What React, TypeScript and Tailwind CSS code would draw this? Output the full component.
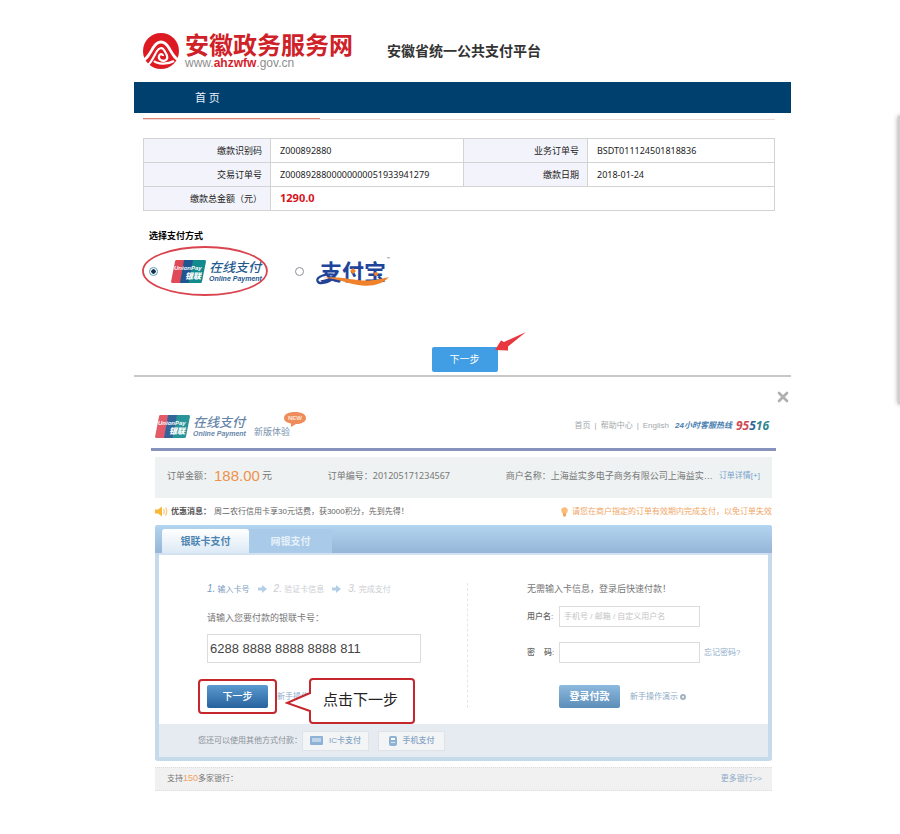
import { ReactNode, useState } from 'react';
import { X } from 'lucide-react';

/* ───────── Logos & icons ───────── */
const UnionPayMark = ({ className }: { className?: string }) => (
  <svg viewBox="0 0 35 23" className={className} aria-label="UnionPay">
    <path d="M5 0 H16 L11 23 H1.500 Q-0.300 23 0.200 21 L4 1.500 Q4.300 0 5 0 Z" fill="#e04a58" />
    <path d="M13 0 H25 L20 23 H9 Z" fill="#1f5590" />
    <path d="M22 0 H33.500 Q35.300 0 34.900 2 L31 21.500 Q30.700 23 29.500 23 H17.500 Z" fill="#128a8e" />
    <text x="3" y="10" fontSize="6" fontStyle="italic" fontWeight="700" fill="#fff" fontFamily="Liberation Sans, sans-serif">
      UnionPay
    </text>
    <text x="14" y="19" fontSize="8" fontStyle="italic" fontWeight="900" fill="#fff" fontFamily="Noto Sans CJK SC, sans-serif">
      银联
    </text>
  </svg>
);

const UnionPayLogo = ({ muted }: { muted?: boolean }) => (
  <span className={`flex items-center gap-[3px] ${muted ? 'text-[#55799f] opacity-90' : 'text-[#1f5b8f]'}`}>
    <UnionPayMark className="h-[23px] w-[35px]" />
    <span className="flex flex-col">
      <span className="text-[13px] font-medium italic leading-[15px]">在线支付</span>
      <span className="font-['Liberation_Sans',sans-serif] text-[7px] font-bold italic leading-[8px]">Online Payment</span>
    </span>
  </span>
);

const AlipayLogo = () => (
  <span className="relative block pl-1 text-[22px] font-bold leading-[24px] text-[#20449a]">
    支付宝
    <svg viewBox="0 0 74 28" className="absolute left-0 top-0 h-[28px] w-[74px]">
      <path d="M20 16 C9 14 0 18 1.500 22 C3 26 13 24 19 18" fill="none" stroke="#20449a" strokeWidth="2.200" />
      <path d="M7 19 C22 16 38 22 52 21.500 C61 21 65 20 73 18 C67 25 57 27.500 46 26.500 C31 25 22 19 7 19 Z" fill="#f0822b" />
      <path d="M37 9 l3 3 -3 3 -3 -3 Z" fill="#f0822b" />
      <circle cx="60" cy="15" r="2" fill="#f0822b" />
    </svg>
    <span className="absolute -right-1 -top-1 text-[4px] leading-[8px] text-gray-500">™</span>
  </span>
);

const SiteEmblem = () => (
  <svg viewBox="0 0 36 36" className="h-[36px] w-[36px]">
    <circle cx="18" cy="18" r="18" fill="#dd1a22" />
    <path d="M-2 28 C4 27 7 20 10 15 C13 10 16 9 18 9 C20 9 23 10 26 15 C29 20 32 27 38 28" fill="none" stroke="#fff" strokeWidth="2.800" />
    <path d="M5 32 C9 29 12 21 14 18 C16 15 19 14 21 17 C23 20 26 25 23 27 C20 29 15 27 16 23 C17 20 20 21 20 23" fill="none" stroke="#fff" strokeWidth="2.200" />
    <path d="M11 28 C14 31 24 32 31 28" fill="none" stroke="#fff" strokeWidth="2.400" />
  </svg>
);

const StepArrow = () => (
  <svg viewBox="0 0 9 8" className="h-2 w-[9px]">
    <path d="M0 2.500 H4 V0 L9 4 L4 8 V5.500 H0 Z" fill="#b3cfe8" />
  </svg>
);

const SpeakerIcon = () => (
  <svg viewBox="0 0 13 11" className="h-[11px] w-[13px]">
    <path d="M0 3.500 H3 L7 0.500 V10.500 L3 7.500 H0 Z" fill="#f6b73c" />
    <path d="M8.500 3 Q10 5.500 8.500 8 M10.500 1.500 Q13 5.500 10.500 9.500" fill="none" stroke="#f8c876" strokeWidth="1.200" />
  </svg>
);

const BulbIcon = () => (
  <svg viewBox="0 0 7 10" className="h-[10px] w-[7px]">
    <circle cx="3.500" cy="3.500" r="3.200" fill="#f9bd7c" />
    <path d="M2 6 H5 V9 Q3.500 10.500 2 9 Z" fill="#f2a862" />
  </svg>
);

/* ───────── Order summary ───────── */
const LabelCell = ({ children }: { children: ReactNode }) => (
  <th scope="row" className="h-6 border border-[#d3d3d3] bg-[#f3f4fb] px-2 text-right font-normal">
    {children}
  </th>
);

const ValueCell = ({ children, span }: { children: ReactNode; span?: number }) => (
  <td colSpan={span} className="border border-[#d3d3d3] px-[9px]">
    {children}
  </td>
);

const OrderTable = () => (
  <table className="w-full table-fixed border-collapse text-[9px] leading-[12px] text-[#222]">
    <colgroup>
      <col className="w-[127px]" />
      <col className="w-[193px]" />
      <col className="w-[124px]" />
      <col />
    </colgroup>
    <tbody>
      <tr>
        <LabelCell>缴款识别码</LabelCell>
        <ValueCell>Z000892880</ValueCell>
        <LabelCell>业务订单号</LabelCell>
        <ValueCell>BSDT011124501818836</ValueCell>
      </tr>
      <tr>
        <LabelCell>交易订单号</LabelCell>
        <ValueCell>Z0008928800000000051933941279</ValueCell>
        <LabelCell>缴款日期</LabelCell>
        <ValueCell>2018-01-24</ValueCell>
      </tr>
      <tr>
        <LabelCell>缴款总金额（元）</LabelCell>
        <ValueCell span={3}>
          <strong className="text-[11px] text-[#d8141c]">1290.0</strong>
        </ValueCell>
      </tr>
    </tbody>
  </table>
);

const radioClass =
  'h-[9px] w-[9px] appearance-none rounded-full border border-[#8b9299] bg-white checked:border-[#5b9fb5] checked:bg-[radial-gradient(circle,#12324a_40%,#fff_50%)]';

const PayMethods = () => {
  const [method, setMethod] = useState('unionpay');

  return (
    <fieldset>
      <legend className="px-1.5 text-[9px] font-bold leading-[12px] text-black">选择支付方式</legend>
      <div className="mt-[15px] flex h-7 items-center gap-[33px] pl-1.5">
        <label className="relative flex items-center gap-[13px]">
          <input
            type="radio"
            name="method"
            checked={method === 'unionpay'}
            onChange={() => setMethod('unionpay')}
            className={radioClass}
          />
          <UnionPayLogo />
          {/* hand-drawn highlight */}
          <svg viewBox="0 0 126 50" className="pointer-events-none absolute -left-[7px] -top-[14px] h-[50px] w-[126px]">
            <ellipse cx="63" cy="25" rx="62" ry="24" fill="none" stroke="#d9444f" strokeWidth="1.800" />
          </svg>
        </label>
        <label className="flex items-center gap-3">
          <input
            type="radio"
            name="method"
            checked={method === 'alipay'}
            onChange={() => setMethod('alipay')}
            className={radioClass}
          />
          <AlipayLogo />
        </label>
      </div>
    </fieldset>
  );
};

const GovPayment = () => (
  <section className="border-b-2 border-[#c8c8c8]">
    <header className="flex h-[82px] items-center gap-[34px] pl-[9px] pt-5">
      <div className="flex items-center gap-1.5">
        <SiteEmblem />
        <div>
          <div className="text-[24px] font-bold leading-[24px] text-[#cf2128]">安徽政务服务网</div>
          <div className="font-['Liberation_Sans',sans-serif] text-[12px] leading-[12px] text-[#8e8e8e]">
            www.<b className="text-[#d5232b]">ahzwfw</b>.gov.cn
          </div>
        </div>
      </div>
      <h1 className="text-[14px] font-bold leading-[20px] text-[#333]">安徽省统一公共支付平台</h1>
    </header>
    <nav className="flex h-[31px] items-center bg-[#00406f] pl-[61px] pt-0.5 text-[11px] text-[#e8f0f6]">
      <a href="#home">首 页</a>
    </nav>
    <div className="pl-[9px] pr-4">
      <div className="mt-[5px] border-b border-[#ecdeda]">
        <div className="h-px w-[28%] bg-[#e08272]" />
      </div>
      <div className="mt-[18px]">
        <OrderTable />
      </div>
      <div className="mt-[19px]">
        <PayMethods />
      </div>
    </div>
    <div className="mt-[62px] flex justify-center pb-[3px] pl-1">
      <button type="button" className="relative h-[25px] w-[66px] rounded-[2px] bg-[#419de4] text-[10px] text-white">
        下一步
        <svg viewBox="0 0 31 20" className="absolute -right-[28px] -top-[15px] h-[20px] w-[31px]">
          <path d="M0 18 L6 8.500 L9 10 L31 0 L13 14.500 L13 18.500 Z" fill="#e8373e" />
        </svg>
      </button>
    </div>
  </section>
);

/* ───────── UnionPay checkout ───────── */
const CheckoutHeader = () => (
  <header className="ml-[17px] mr-[15px] flex items-center justify-between border-b-[3px] border-[#8793bd] pb-2.5 pl-1 pr-[7px]">
    <div className="flex items-center gap-2">
      <UnionPayLogo muted />
      <div className="relative pt-3 text-[9px] leading-[12px] text-[#7590ac]">
        新版体验
        <svg viewBox="0 0 22 15" className="absolute -top-[2px] left-[30px] h-[15px] w-[22px]">
          <path d="M11 0 C17 0 22 2 22 6 C22 10 17 12 12 12 L7 15 L7 11.500 C3 11 0 9 0 6 C0 2 5 0 11 0 Z" fill="#ef8c5b" />
          <text x="4" y="8" fontSize="6" fontWeight="700" fill="#fde6d4" fontFamily="Liberation Sans, sans-serif">
            NEW
          </text>
        </svg>
      </div>
    </div>
    <div className="flex items-center gap-1 text-[8px] leading-[14px] text-[#a3a7ab]">
      <a href="#index">首页</a>
      <span>|</span>
      <a href="#help">帮助中心</a>
      <span>|</span>
      <a href="#english">English</a>
      <span className="pl-0.5 font-bold italic text-[#4a80b0]">24小时客服热线</span>
      <span className="font-['Noto_Sans',sans-serif] text-[12px] font-bold italic">
        <span className="text-[#cf4a55]">95</span>
        <span className="text-[#2f6398]">5</span>
        <span className="text-[#2f868c]">16</span>
      </span>
    </div>
  </header>
);

const OrderBar = () => (
  <div className="mt-1.5 flex h-[41px] items-center justify-between bg-[#eef2f2] px-3 pb-1 text-[9px] leading-[18px] text-[#777]">
    <div className="flex items-center">
      订单金额：
      <span className="pl-0.5 font-['Liberation_Sans',sans-serif] text-[15px] text-[#f0914a]">188.00</span>
      <span className="pl-0.5 text-[10px]">元</span>
    </div>
    <div className="font-['Noto_Sans','Noto_Sans_CJK_SC',sans-serif]">订单编号：201205171234567</div>
    <div className="flex items-center gap-1.5">
      商户名称：上海益实多电子商务有限公司上海益实…
      <a href="#detail" className="text-[8px] text-[#79a3cc]">
        订单详情[+]
      </a>
    </div>
  </div>
);

const NoticeBar = () => (
  <div className="flex h-[27px] items-center justify-between text-[8px] leading-[12px]">
    <div className="flex items-center gap-[3px] text-[#666]">
      <SpeakerIcon />
      <b className="text-[#555]">优惠消息：</b>
      <span>周二农行信用卡享30元话费，获3000积分，先到先得！</span>
    </div>
    <div className="flex items-center gap-1 whitespace-nowrap text-[#f0a666]">
      <BulbIcon />
      请您在商户指定的订单有效期内完成支付，以免订单失效
    </div>
  </div>
);

const steps = ['输入卡号', '验证卡信息', '完成支付'];

const CardForm = () => {
  const [card, setCard] = useState('6288 8888 8888 8888 811');

  return (
    <form className="flex flex-col items-start border-r border-dashed border-[#e6e6e6] pl-12">
      <ol className="flex h-3 items-center gap-2 text-[8px] leading-[12px]">
        {steps.map((step, idx) => (
          <li key={step} className={`flex items-center gap-[7px] ${idx === 0 ? 'text-[#7d9cc0]' : 'text-[#cacdd2]'}`}>
            {idx > 0 && <StepArrow />}
            <span>
              <i className="font-['Liberation_Sans',sans-serif] text-[10px]">{idx + 1}.</i> {step}
            </span>
          </li>
        ))}
      </ol>
      <label htmlFor="card" className="mt-4 text-[9px] leading-[14px] text-[#777]">
        请输入您要付款的银联卡号：
      </label>
      <input
        id="card"
        value={card}
        onChange={(e) => setCard(e.target.value)}
        className="mt-[9px] h-[29px] w-[214px] border border-[#dcdcdc] bg-white px-0.5 font-['Liberation_Sans',sans-serif] text-[13px] text-[#444]"
      />
      <div className="relative mt-[22px] flex items-center gap-[9px]">
        <button
          type="button"
          className="h-[23px] w-[61px] rounded-[2px] bg-linear-to-b from-[#5b9bd0] to-[#28629e] text-[10px] font-medium text-white"
        >
          下一步
        </button>
        {/* the callout covers the rest of this link */}
        <a href="#demo" className="text-[8px] leading-[12px] text-[#8eabc9]">
          新手操作演示
        </a>
        <div className="pointer-events-none absolute -left-[9px] -top-1.5 h-[35px] w-[79px] rounded-[4px] border-2 border-[#c5272c]" />
        <div className="absolute -top-[7px] left-[78px] h-[46px] w-[130px]">
          <svg viewBox="0 0 130 46" className="absolute inset-0 h-[46px] w-[130px]">
            <path
              d="M28 1 H126 Q129 1 129 4 V42 Q129 45 126 45 H28 Q25 45 25 42 V33 L2 25 L25 15 V4 Q25 1 28 1 Z"
              fill="#fff"
              stroke="#c5272c"
              strokeWidth="2"
            />
          </svg>
          <p className="relative pl-[38px] text-[15px] leading-[44px] text-[#222]">点击下一步</p>
        </div>
      </div>
    </form>
  );
};

const loginInputClass = 'h-[21px] w-[141px] border border-[#dcdcdc] bg-white px-1 text-[8px] text-[#555] placeholder:text-[#c4c4c4]';

const LoginForm = () => (
  <form className="pl-[59px] text-[8px] text-[#666]">
    <p className="text-[9px] leading-[12px] text-[#777]">无需输入卡信息，登录后快速付款！</p>
    <div className="mt-[11px] flex h-[21px] items-center">
      <label htmlFor="user" className="w-8 font-medium">
        用户名:
      </label>
      <input id="user" placeholder="手机号 / 邮箱 / 自定义用户名" className={loginInputClass} />
    </div>
    <div className="mt-[15px] flex h-[21px] items-center">
      <label htmlFor="password" className="w-8 whitespace-pre font-medium">
        {'密    码:'}
      </label>
      <input id="password" type="password" className={loginInputClass} />
      <a href="#forgot" className="pl-1 text-[#8eabc9]">
        忘记密码?
      </a>
    </div>
    <div className="mt-[22px] flex items-center pl-8">
      <button
        type="button"
        className="h-[23px] w-[61px] rounded-[2px] bg-linear-to-b from-[#8dbade] to-[#5c8db8] text-[10px] font-bold text-white"
      >
        登录付款
      </button>
      <a href="#demo" className="flex items-center gap-0.5 pl-2.5 text-[#8eabc9]">
        新手操作演示
        <span className="h-[6px] w-[6px] rounded-full border-2 border-[#9fb3c4]" />
      </a>
    </div>
  </form>
);

const otherButtonClass =
  'flex h-5 w-[67px] items-center justify-center gap-1.5 border border-[#dfe3e8] bg-[#f2f4f6] text-[8px] font-medium text-[#84a3c2]';

const CheckoutPanel = () => (
  <div className="rounded-[3px] border-x-4 border-b-4 border-[#c5daeb] bg-white">
    <div className="-mx-1 flex h-7 items-end rounded-t-[3px] bg-linear-to-b from-[#b3d5f0] to-[#96b5d8] pl-[7px] text-[10px] font-bold">
      <button type="button" className="h-6 w-[87px] rounded-t-[3px] bg-linear-to-b from-white to-[#dce9f5] text-[#4e84b0]">
        银联卡支付
      </button>
      <button type="button" className="h-6 w-[83px] bg-[#a9cae8] text-[#e6f1fa]">
        网银支付
      </button>
    </div>
    <div className="h-0.5 bg-[#d3e2f0]" />
    <div className="grid grid-cols-[309fr_300fr] pb-4 pt-7">
      <CardForm />
      <LoginForm />
    </div>
    <div className="flex h-[33px] items-center bg-[#e6ebf1] pl-[39px] text-[8px] text-[#8a8f96]">
      <span>您还可以使用其他方式付款：</span>
      <div className="flex gap-[9px]">
        <button type="button" className={otherButtonClass}>
          <svg viewBox="0 0 13 9" className="h-[9px] w-[13px]">
            <rect width="13" height="9" rx="1" fill="#8db2d5" />
            <rect x="2" y="2" width="9" height="4" fill="#bcd3e8" />
          </svg>
          IC卡支付
        </button>
        <button type="button" className={otherButtonClass}>
          <svg viewBox="0 0 8 10" className="h-[10px] w-2">
            <rect width="8" height="10" rx="2" fill="#8db2d5" />
            <rect x="2" y="2" width="4" height="2" fill="#fff" />
            <rect x="2" y="6" width="4" height="1" fill="#dce8f3" />
          </svg>
          手机支付
        </button>
      </div>
    </div>
  </div>
);

const UnionPayCheckout = () => (
  <section className="font-['Liberation_Sans','Noto_Sans_CJK_SC',sans-serif]">
    <div className="flex h-[37px] justify-end pt-3">
      <button type="button" aria-label="关闭" className="flex h-4 w-4 items-center justify-center text-[#b0b0b0]">
        <X size={18} strokeWidth={4} />
      </button>
    </div>
    <CheckoutHeader />
    <div className="ml-[21px] mr-[19px]">
      <OrderBar />
      <NoticeBar />
      <CheckoutPanel />
      <div className="mt-1.5 flex h-6 items-center justify-between border-y border-dotted border-[#dcdcdc] bg-[#f1f1f1] pl-3 pr-2.5 text-[8px] text-[#777]">
        <span>
          支持<span className="text-[9px] text-[#f2a25f]">150</span>多家银行：
        </span>
        <a href="#banks" className="text-[#8eabc9]">
          更多银行&gt;&gt;
        </a>
      </div>
    </div>
  </section>
);

const App = () => {
  return (
    <main className="relative min-h-screen overflow-hidden bg-white pb-10 pl-[134px] pr-[109px] font-['Noto_Sans','Noto_Sans_CJK_SC',sans-serif]">
      <GovPayment />
      <UnionPayCheckout />
      {/* edge shadow of the neighbouring sheet */}
      <div className="absolute -right-2 top-[116px] h-[288px] w-[10px] bg-[#cfcfcf] shadow-[0_0_5px_rgba(0,0,0,0.4)]" />
    </main>
  );
};

export default App;
